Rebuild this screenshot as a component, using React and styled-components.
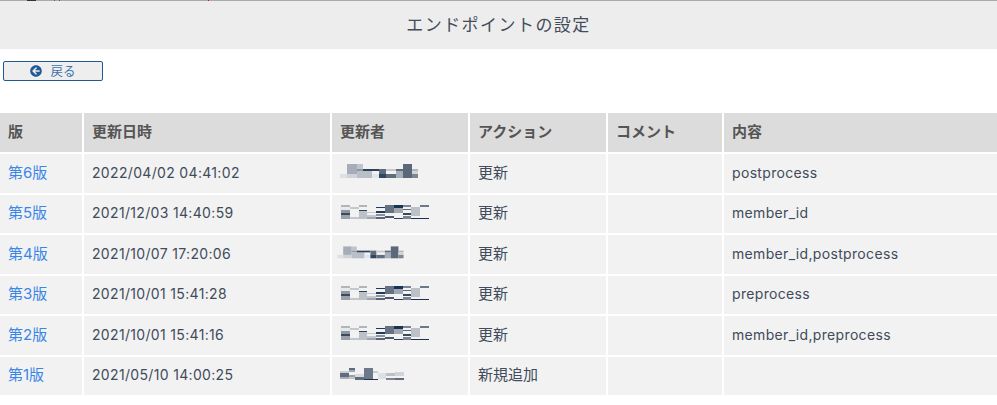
import React from "react";
import styled, { createGlobalStyle } from "styled-components";
import { FaArrowCircleLeft } from "react-icons/fa";

const GlobalStyle = createGlobalStyle`
  html, body {
    margin: 0;
    padding: 0;
    background: #fff;
    font-family: Inter, "Noto Sans CJK JP", sans-serif;
    overflow: hidden;
  }
`;

const Page = styled.div`
  width: 997px;
  height: 405px;
  overflow: hidden;
`;

const TopStrip = styled.div`
  height: 1px;
  background: linear-gradient(
    to right,
    #aaa 27px,
    #2a3346 27px,
    #2a3346 36px,
    #aaa 36px,
    #aaa 54px,
    #3a5ea8 54px,
    #3a5ea8 55px,
    #aaa 55px,
    #aaa 59px,
    #c03050 59px,
    #c03050 60px,
    #aaa 60px,
    #aaa 208px,
    #c8103c 208px,
    #c8103c 209px,
    #aaa 209px
  );
`;

const TitleBar = styled.h1`
  margin: 0;
  height: 48px;
  padding-bottom: 4px;
  box-sizing: border-box;
  display: flex;
  align-items: center;
  justify-content: center;
  background: #ededed;
  color: #444c5a;
  font-size: 17px;
  font-weight: 400;
  letter-spacing: 1.45px;
`;

const Toolbar = styled.div`
  height: 64px;
  padding: 12px 0 0 3px;
  box-sizing: border-box;
`;

const BackButton = styled.button`
  width: 100px;
  height: 20px;
  padding: 0 0 1px;
  display: flex;
  align-items: center;
  justify-content: center;
  gap: 8px;
  background: #eeeeee;
  border: 1px solid #1f5a96;
  border-radius: 2px;
  color: #3f72ac;
  font-family: inherit;
  font-size: 12.5px;
  svg {
    color: #1f5a96;
    width: 12px;
    height: 12px;
  }
`;

const Table = styled.table`
  width: 1001px;
  margin: -2px 0 0 -2px;
  border-collapse: separate;
  border-spacing: 2px 2px;
  table-layout: fixed;
`;

const HeadCell = styled.th`
  width: ${(p) => p.$w}px;
  height: 39px;
  padding: 0 8px 4px;
  box-sizing: border-box;
  background: #dcdcdc;
  color: #555;
  font-size: 15px;
  font-weight: 700;
  text-align: left;
`;

const Cell = styled.td`
  height: 38.5px;
  padding: 0 8px 2px;
  box-sizing: border-box;
  background: #f2f2f2;
  color: #414b5a;
  font-size: 14px;
  letter-spacing: 0.33px;
  vertical-align: middle;
`;

const LabelCell = styled(Cell)`
  padding-bottom: 4px;
  font-size: 15px;
  letter-spacing: 0;
`;

const VersionLink = styled.a`
  color: #3a86e8;
  text-decoration: none;
`;

const Mosaic = styled.svg`
  display: block;
  margin: -1px 0 1px ${(p) => p.$left}px;
`;

const patternA = [
  [12, 4, 10, 10, "#a6adb8"], [22, 4, 6, 5, "#c0c5cc"], [22, 9, 6, 2, "#8e97a4"],
  [5, 14, 7, 4, "#dcdfe3"], [12, 14, 10, 4, "#d0d3d8"], [22, 11, 15, 7, "#b9bfc6"],
  [28, 9, 16, 2, "#2d4258"], [37, 14, 7, 4, "#e3e5e8"], [44, 9, 7, 5, "#5f6c7c"],
  [44, 14, 7, 4, "#2f4561"], [51, 14, 10, 4, "#5f6c7c"], [51, 9, 10, 2, "#c5c9ce"],
  [61, 11, 7, 7, "#a8aeb6"], [61, 9, 7, 2, "#5f6c7c"], [68, 4, 9, 14, "#5b6879"],
  [77, 9, 6, 2, "#b0b5bc"], [77, 11, 6, 3, "#d0d3d8"], [77, 14, 6, 4, "#7c8694"],
];

const patternB = [
  [6, 4, 9, 2, "#b0b5bc"], [5, 6, 10, 3, "#e8e9eb"], [6, 9, 9, 3, "#8f97a3"],
  [6, 12, 9, 2, "#3c4a5e"], [6, 14, 9, 4, "#9aa1ac"], [15, 6, 9, 2, "#c5c9ce"],
  [15, 16, 9, 2, "#c4c8cd"], [24, 4, 8, 2, "#b0b5bc"], [24, 9, 8, 1, "#2d4258"],
  [24, 10, 8, 8, "#bcc1c7"], [32, 11, 9, 1, "#c5c9ce"], [32, 14, 9, 2, "#c5c9ce"],
  [32, 16, 9, 2, "#a0a6b0"], [41, 6, 9, 1, "#223a55"], [41, 10, 9, 2, "#223a55"],
  [41, 13, 9, 2, "#8a93a0"], [41, 16, 9, 2, "#5a6677"], [50, 4, 9, 8, "#667284"],
  [50, 15, 9, 2, "#4c5a6c"], [59, 4, 9, 3, "#1b3352"], [59, 7, 9, 5, "#a0a6b2"],
  [59, 17, 9, 1, "#2a3f5a"], [68, 4, 8, 2, "#7b8593"], [68, 8, 8, 1, "#5a6677"],
  [68, 12, 8, 2, "#3a4a5e"], [68, 15, 8, 3, "#7b8593"], [76, 6, 9, 9, "#bcc1c7"],
  [76, 17, 9, 1, "#1b3352"], [85, 4, 9, 2, "#6d7888"], [85, 17, 9, 1, "#1b3352"],
];

const patternC = [
  [5, 8, 9, 2, "#c8ccd1"], [5, 10, 9, 4, "#5f6c7c"], [5, 14, 9, 2, "#a6adb8"],
  [14, 5, 6, 2, "#5f6c7c"], [14, 7, 6, 2, "#a0a7b2"], [14, 12, 6, 2, "#9aa1ac"],
  [14, 14, 6, 2, "#c0c5cc"], [20, 11, 9, 3, "#d8dadd"], [20, 14, 9, 3, "#5f6c7c"],
  [29, 5, 9, 11, "#6d7888"], [29, 16, 9, 1, "#1b3352"], [38, 8, 5, 2, "#c8ccd1"],
  [38, 16, 5, 1, "#1b3352"], [43, 10, 8, 6, "#dcdfe3"], [51, 10, 9, 3, "#bcc1c7"],
  [51, 15, 9, 2, "#7b8593"], [60, 9, 9, 4, "#d0d3d8"], [60, 15, 9, 2, "#5f6c7c"],
];

function Blurred({ rects, scale = 1, left = -5 }) {
  return (
    <Mosaic
      $left={left}
      width={100 * scale}
      height={22 * scale}
      viewBox="0 0 100 22"
      preserveAspectRatio="none"
      aria-hidden="true"
    >
      {rects.map(([x, y, w, h, fill], i) => (
        <rect key={i} x={x} y={y} width={w} height={h} fill={fill} />
      ))}
    </Mosaic>
  );
}

const columns = [
  { label: "版", w: 82 },
  { label: "更新日時", w: 246 },
  { label: "更新者", w: 136 },
  { label: "アクション", w: 136 },
  { label: "コメント", w: 114 },
  { label: "内容", w: 273 },
];

const rows = [
  { ver: "第6版", date: "2022/04/02 04:41:02", who: <Blurred rects={patternA} />, action: "更新", body: "postprocess" },
  { ver: "第5版", date: "2021/12/03 14:40:59", who: <Blurred rects={patternB} />, action: "更新", body: "member_id" },
  { ver: "第4版", date: "2021/10/07 17:20:06", who: <Blurred rects={patternA} scale={0.85} left={-7} />, action: "更新", body: "member_id,postprocess" },
  { ver: "第3版", date: "2021/10/01 15:41:28", who: <Blurred rects={patternB} />, action: "更新", body: "preprocess" },
  { ver: "第2版", date: "2021/10/01 15:41:16", who: <Blurred rects={patternB} />, action: "更新", body: "member_id,preprocess" },
  { ver: "第1版", date: "2021/05/10 14:00:25", who: <Blurred rects={patternC} />, action: "新規追加", body: "" },
];

export default function App() {
  return (
    <Page>
      <GlobalStyle />
      <TopStrip />
      <TitleBar>エンドポイントの設定</TitleBar>
      <Toolbar>
        <BackButton>
          <FaArrowCircleLeft />
          戻る
        </BackButton>
      </Toolbar>
      <Table>
        <thead>
          <tr>
            {columns.map((c) => (
              <HeadCell key={c.label} $w={c.w}>{c.label}</HeadCell>
            ))}
          </tr>
        </thead>
        <tbody>
          {rows.map((r) => (
            <tr key={r.ver}>
              <LabelCell><VersionLink href="#">{r.ver}</VersionLink></LabelCell>
              <Cell>{r.date}</Cell>
              <Cell>{r.who}</Cell>
              <LabelCell>{r.action}</LabelCell>
              <Cell />
              <Cell>{r.body}</Cell>
            </tr>
          ))}
        </tbody>
      </Table>
    </Page>
  );
}
